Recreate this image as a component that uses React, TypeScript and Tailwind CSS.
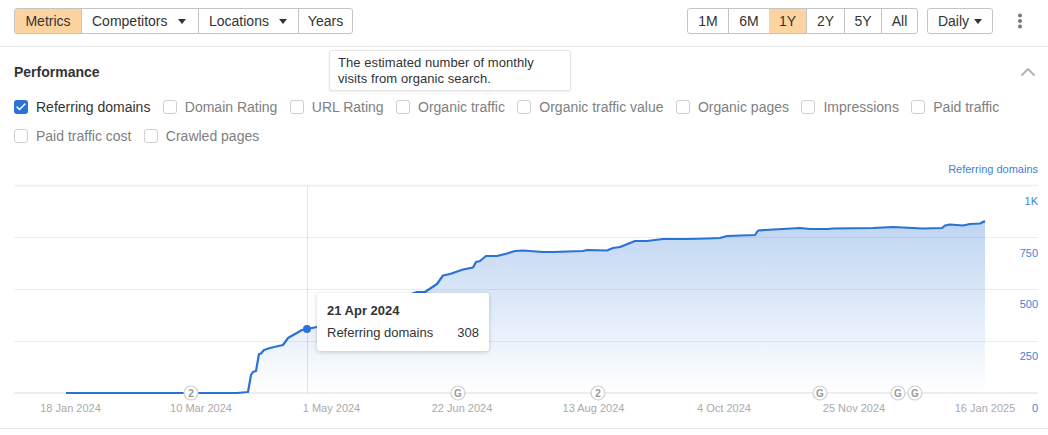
import React from 'react';
import { ChevronUp, Check } from 'lucide-react';

const linePoints = [
  [66, 393], [237, 393], [248, 392], [251, 375], [253, 372], [256, 371], [259, 354], [261, 353.5], [264, 350], [270, 348],
  [283, 345], [288, 338], [302, 330], [307, 329], [317, 327], [340, 325], [370, 315], [400, 298], [417, 292], [425, 292], [437, 284],
  [443, 275.5], [450, 274], [463, 269.5], [473, 267.5], [476, 262], [480, 261], [486, 256], [497, 256], [507, 253.5],
  [515, 251], [523, 250.5], [543, 252], [553, 252], [583, 251], [587, 250], [607, 250.5], [613, 248], [620, 247],
  [635, 241], [647, 241], [663, 239], [687, 239], [707, 238.5], [720, 238], [727, 236], [755, 235], [758, 230.5],
  [765, 230], [800, 228], [810, 229], [828, 229], [833, 228.5], [873, 228], [893, 227], [913, 228], [923, 228.5],
  [942, 228], [945, 225.5], [950, 224.5], [963, 225.5], [970, 224], [980, 223.5], [985, 221],
];

const linePath = linePoints.map(([x, y], i) => `${i === 0 ? 'M' : 'L'}${x} ${y}`).join(' ');
const areaPath = `${linePath} L985 393 L66 393 Z`;

const gridLines = [
  { y: 185.5, w: 1.5 },
  { y: 237.5, w: 1 },
  { y: 289.5, w: 1 },
  { y: 341.5, w: 1 },
  { y: 393, w: 2 },
];

const xLabels = [
  { x: 70.5, label: '18 Jan 2024' },
  { x: 201, label: '10 Mar 2024' },
  { x: 331.5, label: '1 May 2024' },
  { x: 462, label: '22 Jun 2024' },
  { x: 593.5, label: '13 Aug 2024' },
  { x: 724, label: '4 Oct 2024' },
  { x: 854, label: '25 Nov 2024' },
  { x: 985, label: '16 Jan 2025' },
];

const yLabels = [
  { y: 205, label: '1K' },
  { y: 257, label: '750' },
  { y: 308, label: '500' },
  { y: 360, label: '250' },
  { y: 412, label: '0' },
];

const markers = [
  { x: 191, label: '2' },
  { x: 458, label: 'G' },
  { x: 598, label: '2' },
  { x: 820, label: 'G' },
  { x: 898, label: 'G' },
  { x: 915, label: 'G' },
];

const metrics = [
  'Domain Rating',
  'URL Rating',
  'Organic traffic',
  'Organic traffic value',
  'Organic pages',
  'Impressions',
  'Paid traffic',
  'Paid traffic cost',
  'Crawled pages',
];

const Caret = () => (
  <svg width="8" height="5" viewBox="0 0 8 5" className="shrink-0">
    <path d="M0 0 H8 L4 5 Z" fill="#333" />
  </svg>
);

const App: React.FC = () => {
  return (
    <div className="w-[1048px] h-[435px] overflow-hidden bg-white text-[14px] text-[#333] font-['Liberation_Sans',Arial,sans-serif] relative">
      {/* Toolbar */}
      <div className="h-[47px] border-b border-[#e8e8e8] pl-[14px] pr-[25px] pt-[8px] flex items-start">
        <div className="flex h-[26px] rounded-[3px] border border-[#c4c4c4] overflow-hidden">
          <div className="w-[66px] flex items-center justify-center bg-[#fdd3a0]">Metrics</div>
          <div className="w-[117px] pl-[10px] flex items-center gap-[11px] border-l border-[#c4c4c4]">Competitors <Caret /></div>
          <div className="w-[100px] pl-[10px] flex items-center gap-[10px] border-l border-[#c4c4c4]">Locations <Caret /></div>
          <div className="w-[54px] flex items-center justify-center border-l border-[#c4c4c4]">Years</div>
        </div>

        <div className="ml-auto flex h-[26px] rounded-[3px] border border-[#c4c4c4] overflow-hidden">
          <div className="w-[40px] flex items-center justify-center">1M</div>
          <div className="w-[41px] flex items-center justify-center border-l border-[#c4c4c4]">6M</div>
          <div className="w-[37px] flex items-center justify-center bg-[#fdd3a0]">1Y</div>
          <div className="w-[38px] flex items-center justify-center border-l border-[#c4c4c4]">2Y</div>
          <div className="w-[37px] flex items-center justify-center border-l border-[#c4c4c4]">5Y</div>
          <div className="w-[36px] flex items-center justify-center border-l border-[#c4c4c4]">All</div>
        </div>

        <div className="ml-[9px] w-[66px] h-[26px] rounded-[3px] border border-[#c4c4c4] flex items-center justify-center gap-[5px]">
          Daily <Caret />
        </div>

        <svg width="6" height="16" viewBox="0 0 6 16" className="ml-[24px] mt-[5px]">
          <circle cx="3" cy="2.5" r="2" fill="#777" />
          <circle cx="3" cy="8" r="2" fill="#777" />
          <circle cx="3" cy="13.5" r="2" fill="#777" />
        </svg>
      </div>

      {/* Metric description popup */}
      <div className="absolute left-[329px] top-[50px] w-[242px] h-[41px] bg-white border border-[#e4e4e4] rounded-[3px] shadow-[0_1px_2px_rgba(0,0,0,0.08)] px-[8px] py-[4px] text-[13px] leading-[16px] tracking-[0.07px]">
        The estimated number of monthly visits from organic search.
      </div>

      {/* Performance */}
      <div className="px-[14px] h-[50px] flex items-center justify-between">
        <div className="font-bold text-[14px] mt-[1px]">Performance</div>
        <ChevronUp size={24} strokeWidth={2} className="text-[#b5b5b5] -mr-[6px]" />
      </div>

      <div className="pl-[14px] pr-[10px] flex flex-wrap gap-x-[12.4px] gap-y-[9px]">
        <label className="h-[20px] flex items-center gap-[8px]">
          <span className="w-[14px] h-[14px] rounded-[3px] bg-[#2a72d5] flex items-center justify-center">
            <Check size={12} strokeWidth={3} className="text-white" />
          </span>
          Referring domains
        </label>
        {metrics.map((name) => (
          <label key={name} className="h-[20px] flex items-center gap-[8px] text-[#808080]">
            <span className="w-[14px] h-[14px] rounded-[3px] border border-[#cfcfcf] bg-white" />
            {name}
          </label>
        ))}
      </div>

      <div className="mt-[17px] pr-[10px] h-[12px] flex items-center justify-end text-[11px] text-[#3f7fd6]">
        Referring domains
      </div>

      {/* Chart */}
      <svg width="1048" height="250" viewBox="0 180 1048 250" className="block mt-[5px]">
        <defs>
          <linearGradient id="area" x1="0" y1="221" x2="0" y2="393" gradientUnits="userSpaceOnUse">
            <stop offset="0" stopColor="#2a72d5" stopOpacity="0.3" />
            <stop offset="1" stopColor="#2a72d5" stopOpacity="0" />
          </linearGradient>
        </defs>
        <path d={areaPath} fill="url(#area)" />
        {gridLines.map((g) => (
          <line key={g.y} x1="14" x2="1038" y1={g.y} y2={g.y} stroke="#000" strokeOpacity="0.07" strokeWidth={g.w} />
        ))}
        <line x1="307.5" x2="307.5" y1="186" y2="393" stroke="#000" strokeOpacity="0.1" />
        <path d={linePath} fill="none" stroke="#2a72d5" strokeWidth="2.2" strokeLinejoin="round" />
        <circle cx="307" cy="329" r="4" fill="#2a72d5" />
        {markers.map((m, i) => (
          <g key={i}>
            <circle cx={m.x} cy="393" r="7" fill="#fff" stroke="#cfcfcf" strokeWidth="1.2" />
            <text x={m.x} y="396.7" textAnchor="middle" fontSize="10" fontWeight="700" fill="#999">{m.label}</text>
          </g>
        ))}
        {xLabels.map((l) => (
          <text key={l.label} x={l.x} y="412" textAnchor="middle" fontSize="11" fill="#aaa">{l.label}</text>
        ))}
        {yLabels.map((l) => (
          <text key={l.label} x="1038" y={l.y} textAnchor="end" fontSize="11" fill="#3f7fd6">{l.label}</text>
        ))}
      </svg>

      {/* Chart tooltip */}
      <div className="absolute left-[317px] top-[293px] w-[172px] h-[58px] bg-white rounded-[3px] shadow-[0_1px_4px_rgba(0,0,0,0.2)] px-[10px] pt-[10px] text-[13px]">
        <div className="font-bold leading-[16px]">21 Apr 2024</div>
        <div className="flex justify-between leading-[16px] mt-[6px]">
          <span>Referring domains</span>
          <span>308</span>
        </div>
      </div>

      <div className="absolute left-0 right-0 top-[428px] border-t border-[#e8e8e8]" />
    </div>
  );
};

export default App;
